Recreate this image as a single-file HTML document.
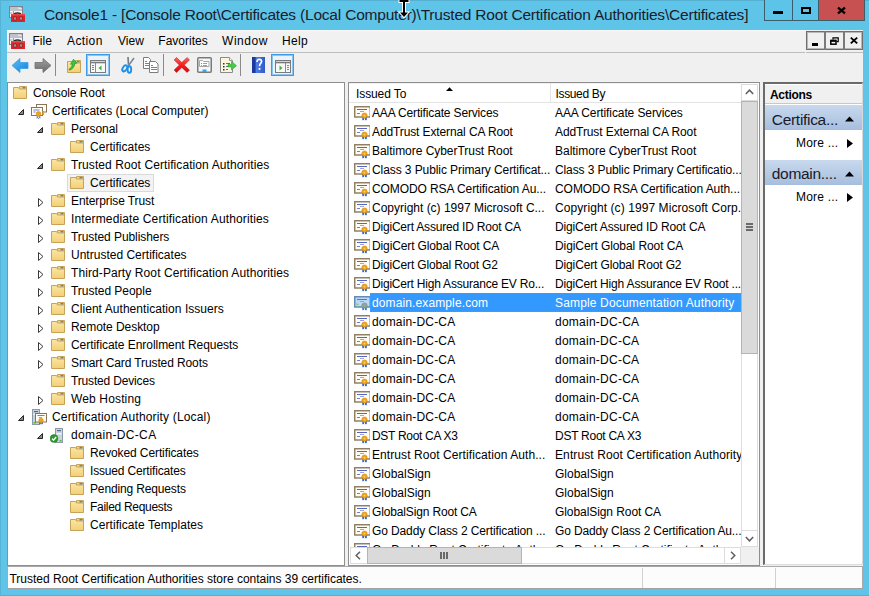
<!DOCTYPE html><html><head><meta charset="utf-8"><title>Console1</title><style>
*{margin:0;padding:0;box-sizing:border-box}
html,body{width:869px;height:596px;overflow:hidden}
body{background:#5ec5e9;position:relative;font-family:"Liberation Sans",sans-serif;font-size:12px;color:#000}
.a{position:absolute}
.t{position:absolute;white-space:nowrap}
svg.a{overflow:visible}
</style></head><body>
<svg width="0" height="0" style="position:absolute"><defs>
<linearGradient id="fold" x1="0" y1="0" x2="0" y2="1"><stop offset="0" stop-color="#fbe6a6"/><stop offset="1" stop-color="#f2cf74"/></linearGradient>
<symbol id="folder" viewBox="0 0 16 16">
 <path d="M7.5 2.5h7v3h-7z" fill="#f3d690" stroke="#c9a45c"/>
 <rect x="10.5" y="3" width="3" height="1.6" fill="#3a8ee0"/>
 <path d="M1.5 3.5h5l1 1.5h7v9.5h-13z" fill="url(#fold)" stroke="#c7a35a"/>
</symbol>
<symbol id="cert" viewBox="0 0 16 16">
 <rect x="0.75" y="0.75" width="15.5" height="10.25" fill="#fffdf6" stroke="#8b7a5c" stroke-width="1.4"/>
 <path d="M3 3.5h10" stroke="#5566c4" stroke-width="1"/><path d="M6 5.5h4" stroke="#9aa6dc"/><path d="M3 7.5h3" stroke="#7080cc"/>
 <path d="M8.3 11h1.8v3.5l-0.9-0.7l-0.9 0.7zM11 11h1.8v3.5l-0.9-0.7l-0.9 0.7z" fill="#1f63d8"/>
 <circle cx="10.5" cy="9.6" r="2.7" fill="#f0a21a" stroke="#cf860a" stroke-width="0.5"/>
 <circle cx="10.5" cy="9.6" r="0.9" fill="#ffd070"/>
</symbol>
<symbol id="certsel" viewBox="0 0 16 16">
 <rect x="0.75" y="0.75" width="15.5" height="10.25" fill="#b9d8f6" stroke="#5f86b0" stroke-width="1.4"/>
 <path d="M3 3.5h10" stroke="#4e77c4"/><path d="M6 5.5h4" stroke="#8aa6dc"/>
 <path d="M2.5 7l2.5 2h-2.5z" fill="#7ac943"/>
 <path d="M8.3 11h1.8v3.5l-0.9-0.7l-0.9 0.7zM11 11h1.8v3.5l-0.9-0.7l-0.9 0.7z" fill="#2d7be0"/>
 <circle cx="10.5" cy="9.6" r="2.7" fill="#8fa59a" stroke="#6f8a80" stroke-width="0.5"/>
</symbol>
<symbol id="store" viewBox="0 0 16 16">
 <rect x="5.5" y="1.5" width="10" height="7.5" fill="#fffdf6" stroke="#8a7456"/>
 <rect x="0.5" y="4.5" width="11" height="8" fill="#fffdf6" stroke="#8a7456"/>
 <path d="M2.5 7h6M2.5 9h2" stroke="#6f7fd0"/>
 <rect x="11.5" y="8" width="1.6" height="4" fill="#f0a21a"/>
 <path d="M6 12l-0.5 3.5l1.5-1l1 1.5l0.5-3zM9 12l0.5 3.5l-1.5-1l-1 1.5l-0.5-3z" fill="#1f63d8"/>
 <circle cx="7.5" cy="11" r="2.4" fill="#f0a21a" stroke="#d18a0c" stroke-width="0.6"/>
</symbol>
<symbol id="ca" viewBox="0 0 16 16">
 <rect x="1.5" y="0.5" width="7" height="15" fill="#c9d3de" stroke="#8c99a8"/>
 <rect x="3" y="2" width="4" height="1.2" fill="#5b6a7a"/>
 <rect x="2.5" y="4.5" width="5" height="1.5" fill="#eef3f8"/>
 <rect x="2.5" y="13" width="2.5" height="1.5" fill="#56c02b"/>
 <rect x="4.5" y="4.5" width="11" height="8.5" fill="#fffdf6" stroke="#8a7456"/>
 <path d="M6.5 6.5h7" stroke="#6f7fd0"/><path d="M8 8.5h3" stroke="#9aa6dc"/>
 <path d="M8.3 12.5h1.5v3l-0.75-0.6l-0.75 0.6zM10.3 12.5h1.5v3l-0.75-0.6l-0.75 0.6z" fill="#1f63d8"/>
 <circle cx="10" cy="11.5" r="2.3" fill="#f0a21a" stroke="#d18a0c" stroke-width="0.5"/>
</symbol>
<symbol id="casrv" viewBox="0 0 16 16">
 <rect x="5.5" y="1.5" width="7" height="14" fill="#c9d3de" stroke="#8c99a8"/>
 <rect x="7" y="3" width="4" height="1.2" fill="#5b6a7a"/>
 <rect x="6.5" y="6" width="5" height="1.5" fill="#eef3f8"/>
 <rect x="9.5" y="13" width="2" height="1.5" fill="#56c02b"/>
 <circle cx="4" cy="11.5" r="3.9" fill="#2f9a2f" stroke="#1c6e1c" stroke-width="0.5"/>
 <path d="M2 11.6l1.5 1.6l2.7-3.2" stroke="#fff" stroke-width="1.3" fill="none"/>
</symbol>
<symbol id="appicon" viewBox="0 0 17 17">
 <rect x="0.5" y="0.5" width="13" height="11" fill="#f6f6f8" stroke="#7f8290"/>
 <path d="M1 2h8.5M1 4h12" stroke="#8a8e9c" stroke-width="1"/>
 <rect x="10.5" y="1.2" width="1" height="1" fill="#8a8e9c"/><rect x="12" y="1.2" width="1" height="1" fill="#8a8e9c"/>
 <path d="M4.5 5v6.5M1 7h2.5" stroke="#9a9eaa"/>
 <path d="M5 8.5c0.5-2 6.5-2 7 0" stroke="#2a2a2a" stroke-width="1.4" fill="none"/>
 <rect x="2" y="8" width="14" height="8" fill="#d8262a"/>
 <rect x="2" y="8" width="14" height="1.5" fill="#ea4a4a"/>
 <rect x="5" y="11" width="2" height="3" fill="#b9c3c8" stroke="#6a2020" stroke-width="0.6"/>
 <rect x="11" y="11" width="2" height="3" fill="#b9c3c8" stroke="#6a2020" stroke-width="0.6"/>
</symbol>
<symbol id="expd" viewBox="0 0 8 8"><path d="M5.5 0.5v5h-5z" fill="#8a8a8a" stroke="#262626" stroke-linejoin="miter"/></symbol>
<symbol id="expc" viewBox="0 0 8 10"><path d="M0.5 0.5v8l4.5-4z" fill="#fff" stroke="#3a3a3a"/></symbol>
</defs></svg>
<div class="a" style="left:0;top:0;width:869px;height:1px;background:#55b0d2"></div>
<div class="a" style="left:0px;top:0px;width:1px;height:596px;background:#55b3d6"></div>
<div class="a" style="left:0px;top:595px;width:869px;height:1px;background:#55b0d2"></div>
<svg class="a" style="left:9px;top:6px" width="17" height="17"><use href="#appicon"/></svg>
<div class="t" style="left:44px;top:6.63px;font-size:15.5px;line-height:16px;color:#1b1b2b;letter-spacing:-0.2px">Console1 - [Console Root\Certificates (Local Computer)\Trusted Root Certification Authorities\Certificates]</div>
<div class="a" style="left:764px;top:0px;width:101px;height:21px;border:1px solid #3d5d6a;border-top:none;background:#5cc3e9"></div>
<div class="a" style="left:792px;top:0px;width:1px;height:21px;background:#3d5d6a"></div>
<div class="a" style="left:818px;top:0px;width:47px;height:21px;background:#c75050;border:1px solid #3d5d6a;border-top:none"></div>
<div class="a" style="left:773px;top:11px;width:10px;height:3px;background:#000"></div>
<div class="a" style="left:801px;top:7px;width:10px;height:7px;border:2px solid #000"></div>
<svg class="a" style="left:837px;top:7px" width="9" height="7"><path d="M1 0.6l7 5.8M8 0.6l-7 5.8" stroke="#000" stroke-width="2.3"/></svg>
<div class="a" style="left:7px;top:30px;width:856px;height:559px;background:#f0f0f0"></div>
<div class="a" style="left:7px;top:30px;width:798px;height:22px;background:#f1f1f1;border-top:1px solid #f8f8f8"></div>
<div class="a" style="left:7px;top:52px;width:798px;height:1px;background:#bdbdbd"></div>
<div class="a" style="left:806px;top:52px;width:57px;height:1px;background:#bdbdbd"></div>
<svg class="a" style="left:9px;top:33px" width="17" height="17"><use href="#appicon"/></svg>
<div class="t" style="left:32.5px;top:32.84px;font-size:12px;line-height:16px;color:#000;letter-spacing:0px">File</div>
<div class="t" style="left:67px;top:32.84px;font-size:12px;line-height:16px;color:#000;letter-spacing:0.4px">Action</div>
<div class="t" style="left:118px;top:32.84px;font-size:12px;line-height:16px;color:#000;letter-spacing:0px">View</div>
<div class="t" style="left:158.3px;top:32.84px;font-size:12px;line-height:16px;color:#000;letter-spacing:0px">Favorites</div>
<div class="t" style="left:222px;top:32.84px;font-size:12px;line-height:16px;color:#000;letter-spacing:0.55px">Window</div>
<div class="t" style="left:282px;top:32.84px;font-size:12px;line-height:16px;color:#000;letter-spacing:0.3px">Help</div>
<div class="a" style="left:806px;top:31px;width:57px;height:19px;border:1px solid #6e6e6e;background:#f0f0f0;box-shadow:inset 0 0 0 1px #b8b8b8"></div>
<div class="a" style="left:824px;top:31px;width:2px;height:19px;background:#7a7a7a"></div>
<div class="a" style="left:843px;top:31px;width:2px;height:19px;background:#7a7a7a"></div>
<div class="a" style="left:812px;top:43px;width:6px;height:2.5px;background:#000"></div>
<svg class="a" style="left:830px;top:37px" width="9" height="8"><path d="M3 2.5v-1.6h5.2v3.8h-1.6" fill="none" stroke="#000" stroke-width="1.2"/><rect x="0.8" y="3.5" width="5.2" height="3.7" fill="none" stroke="#000" stroke-width="1.5"/><path d="M0.8 3.8h5.2" stroke="#000" stroke-width="2"/></svg>
<svg class="a" style="left:850px;top:37px" width="8" height="7"><path d="M0.8 0.6l6.4 5.8M7.2 0.6l-6.4 5.8" stroke="#000" stroke-width="1.9"/></svg>
<svg class="a" style="left:11px;top:58px" width="18" height="15"><defs><linearGradient id="bk" x1="0" y1="0" x2="1" y2="1"><stop offset="0" stop-color="#5cc1f7"/><stop offset="1" stop-color="#0f7fe0"/></linearGradient></defs><path d="M1 7.5l8-7v4h8v6h-8v4z" fill="url(#bk)" stroke="#3a9ee8" stroke-width="0.8" stroke-linejoin="round"/></svg>
<svg class="a" style="left:34px;top:58px" width="18" height="15"><defs><linearGradient id="fw" x1="0" y1="0" x2="0" y2="1"><stop offset="0" stop-color="#a0a0a0"/><stop offset="1" stop-color="#6a6a6a"/></linearGradient></defs><path d="M17 7.5l-8-7v4h-8v6h8v4z" fill="url(#fw)" stroke="#707070" stroke-width="0.8" stroke-linejoin="round"/></svg>
<div class="a" style="left:55px;top:54px;width:1px;height:22px;background:#8a8a8a"></div>
<svg class="a" style="left:66px;top:58px" width="17" height="16"><path d="M9.5 2.5h5v3h-5z" fill="#f3d690" stroke="#c9a45c"/><rect x="11" y="3" width="2.5" height="1.5" fill="#3a8ee0"/><path d="M1.5 3.5h6l1 1.5h6v9.5h-13z" fill="url(#fold)" stroke="#c7a35a"/><path d="M3 11c1.5-0.5 3-2 3.5-5l-2 0.3l3-5l3.5 3.8l-2 0.3c-0.5 3.5-3 6-5.5 6.8z" fill="#3fc23f" stroke="#1f9a1f" stroke-width="0.7" stroke-linejoin="round"/></svg>
<div class="a" style="left:86px;top:54px;width:24px;height:22px;background:#e8f3fd;border:1px solid #3c9be8;box-shadow:inset 0 0 0 1px #8cc4f0"></div>
<svg class="a" style="left:90px;top:60px" width="16" height="13"><rect x="0.5" y="0.5" width="15" height="12" fill="#f8f8f8" stroke="#7a7a7a"/><path d="M0.5 2.5h15" stroke="#7a7a7a" stroke-width="1.6"/><path d="M5.5 3v9.5" stroke="#8a8a8a"/><path d="M2 5.5h2M2 7.5h2M2 9.5h2" stroke="#4a8fd8"/><path d="M11.5 5.5v5l-3-2.5z" fill="#3cb33c"/></svg>
<svg class="a" style="left:120px;top:55px" width="16" height="20"><path d="M8 2l0.5 8.5" stroke="#7a7a7a" stroke-width="1.6"/><path d="M14 3l-5.5 7.5" stroke="#6f8aa8" stroke-width="1.6"/><ellipse cx="4.8" cy="13.4" rx="2" ry="3.3" transform="rotate(35 4.8 13.4)" fill="none" stroke="#1d8fe6" stroke-width="1.9"/><ellipse cx="9.4" cy="14.5" rx="1.8" ry="3.3" fill="none" stroke="#1d8fe6" stroke-width="1.9"/></svg>
<svg class="a" style="left:142px;top:56px" width="18" height="18"><path d="M1.5 1.5h5l2 2v9h-7z" fill="#fff" stroke="#7c7c7c"/><path d="M3 5.5h2M3 7.5h4M3 9.5h4" stroke="#4f88d6"/><path d="M7.5 5.5h6l2.5 2.5v8.5h-8.5z" fill="#fff" stroke="#7c7c7c"/><path d="M9 9.5h2M9 11.5h6M9 13.5h6" stroke="#4f88d6"/></svg>
<div class="a" style="left:163px;top:54px;width:1px;height:22px;background:#8a8a8a"></div>
<svg class="a" style="left:173px;top:56px" width="18" height="18"><defs><linearGradient id="rx" x1="0" y1="0" x2="0" y2="1"><stop offset="0" stop-color="#f06a6a"/><stop offset="0.45" stop-color="#ff2020"/><stop offset="1" stop-color="#d00808"/></linearGradient></defs><path d="M3.5 1.5l5.3 5l5.3-5l2.4 2.4l-5.3 5.1l5.3 5.1l-2.4 2.4l-5.3-5.1l-5.3 5.1l-2.4-2.4l5.3-5.1l-5.3-5.1z" fill="url(#rx)" stroke="#b01010" stroke-width="0.5" stroke-linejoin="round"/></svg>
<svg class="a" style="left:197px;top:57px" width="16" height="16"><rect x="0.75" y="0.75" width="13.5" height="14.5" rx="1" fill="#f5f7fa" stroke="#7a7a7a" stroke-width="1.5"/><path d="M2.5 3.5h3l1 1h5.5v5h-9.5z" fill="#fff" stroke="#a8a8a8"/><path d="M6 6.5h4M6 8.5h4" stroke="#9a9ab8"/><rect x="4" y="6" width="1" height="1" fill="#27a0e8"/><rect x="4" y="8" width="1" height="1" fill="#b0a0a0"/><rect x="5.5" y="12.5" width="4" height="2.5" fill="#27aaf0"/></svg>
<svg class="a" style="left:220px;top:57px" width="18" height="16"><path d="M0.5 0.5h9l3 3v12h-12z" fill="#fcf6dc" stroke="#8a8a8a"/><path d="M9.5 0.5v3h3" fill="#fff" stroke="#9a9a9a"/><rect x="3" y="6" width="1.5" height="1.5" fill="#303030"/><rect x="3" y="9" width="1.5" height="1.5" fill="#303030"/><rect x="3" y="12" width="1.5" height="1.5" fill="#303030"/><path d="M6 6.5h4M6 9.5h2M6 12.5h2" stroke="#5a6aa0"/><path d="M8 7.5h3.5v-3l5 4.2l-5 4.2v-3h-3.5z" fill="#44cc44" stroke="#2aa02a" stroke-width="0.6"/></svg>
<div class="a" style="left:240px;top:54px;width:1px;height:22px;background:#8a8a8a"></div>
<svg class="a" style="left:252px;top:57px" width="14" height="16"><defs><linearGradient id="hp" x1="0" y1="0" x2="1" y2="0"><stop offset="0" stop-color="#1a3aa0"/><stop offset="0.25" stop-color="#1a3aa0"/><stop offset="0.3" stop-color="#4f7ee6"/><stop offset="1" stop-color="#2e58c8"/></linearGradient></defs><rect x="0" y="0" width="13" height="16" fill="url(#hp)"/><path d="M5 5c0-1.8 1-2.6 2.3-2.6c1.4 0 2.3 0.9 2.3 2.2c0 1.6-2 2-2 3.8v0.8" fill="none" stroke="#fff" stroke-width="1.6"/><rect x="6.6" y="11" width="1.8" height="1.8" fill="#fff"/></svg>
<div class="a" style="left:271px;top:54px;width:23px;height:22px;background:#e8f3fd;border:1px solid #3c9be8;box-shadow:inset 0 0 0 1px #8cc4f0"></div>
<svg class="a" style="left:275px;top:60px" width="16" height="13"><rect x="0.5" y="0.5" width="15" height="12" fill="#f8f8f8" stroke="#7a7a7a"/><path d="M0.5 2.5h15" stroke="#7a7a7a" stroke-width="1.6"/><path d="M10.5 3v9.5" stroke="#8a8a8a"/><path d="M12 5.5h2M12 7.5h2M12 9.5h2" stroke="#4a8fd8"/><path d="M4.5 5.5v5l3-2.5z" fill="#3cb33c"/></svg>
<div class="a" style="left:7px;top:82px;width:338px;height:484px;background:#fff;border:1px solid #8e8e8e"></div>
<div class="a" style="left:348px;top:82px;width:412px;height:484px;background:#fff;border:1px solid #8e8e8e"></div>
<div class="a" style="left:763px;top:82px;width:100px;height:483px;background:#fff;border-left:2px solid #6a6a6a;border-top:2px solid #6a6a6a;border-right:1px solid #d8d8d8;border-bottom:1px solid #dcdcdc"></div>
<svg class="a" style="left:12px;top:84px" width="16" height="16"><use href="#folder"/></svg>
<div class="t" style="left:33px;top:84.84px;font-size:12px;line-height:16px;color:#000;letter-spacing:-0.082px">Console Root</div>
<svg class="a" style="left:18px;top:109px" width="8" height="8"><use href="#expd"/></svg>
<svg class="a" style="left:31px;top:103px" width="16" height="16"><use href="#store"/></svg>
<div class="t" style="left:52px;top:102.84px;font-size:12px;line-height:16px;color:#000;letter-spacing:0.012px">Certificates (Local Computer)</div>
<svg class="a" style="left:37px;top:127px" width="8" height="8"><use href="#expd"/></svg>
<svg class="a" style="left:50px;top:120px" width="16" height="16"><use href="#folder"/></svg>
<div class="t" style="left:71px;top:120.84px;font-size:12px;line-height:16px;color:#000;letter-spacing:-0.051px">Personal</div>
<svg class="a" style="left:69px;top:138px" width="16" height="16"><use href="#folder"/></svg>
<div class="t" style="left:90px;top:138.84px;font-size:12px;line-height:16px;color:#000;letter-spacing:0.032px">Certificates</div>
<svg class="a" style="left:37px;top:163px" width="8" height="8"><use href="#expd"/></svg>
<svg class="a" style="left:50px;top:156px" width="16" height="16"><use href="#folder"/></svg>
<div class="t" style="left:71px;top:156.84px;font-size:12px;line-height:16px;color:#000;letter-spacing:0.087px">Trusted Root Certification Authorities</div>
<div class="a" style="left:67px;top:174px;width:87px;height:18px;background:#f3f3f3;border:1px solid #dadada"></div>
<svg class="a" style="left:69px;top:174px" width="16" height="16"><use href="#folder"/></svg>
<div class="t" style="left:90px;top:174.84px;font-size:12px;line-height:16px;color:#000;letter-spacing:0.032px">Certificates</div>
<svg class="a" style="left:38px;top:198px" width="8" height="10"><use href="#expc"/></svg>
<svg class="a" style="left:50px;top:192px" width="16" height="16"><use href="#folder"/></svg>
<div class="t" style="left:71px;top:192.84px;font-size:12px;line-height:16px;color:#000;letter-spacing:-0.096px">Enterprise Trust</div>
<svg class="a" style="left:38px;top:216px" width="8" height="10"><use href="#expc"/></svg>
<svg class="a" style="left:50px;top:210px" width="16" height="16"><use href="#folder"/></svg>
<div class="t" style="left:71px;top:210.84px;font-size:12px;line-height:16px;color:#000;letter-spacing:0.136px">Intermediate Certification Authorities</div>
<svg class="a" style="left:38px;top:234px" width="8" height="10"><use href="#expc"/></svg>
<svg class="a" style="left:50px;top:228px" width="16" height="16"><use href="#folder"/></svg>
<div class="t" style="left:71px;top:228.84px;font-size:12px;line-height:16px;color:#000;letter-spacing:-0.075px">Trusted Publishers</div>
<svg class="a" style="left:38px;top:252px" width="8" height="10"><use href="#expc"/></svg>
<svg class="a" style="left:50px;top:246px" width="16" height="16"><use href="#folder"/></svg>
<div class="t" style="left:71px;top:246.84px;font-size:12px;line-height:16px;color:#000;letter-spacing:0.009px">Untrusted Certificates</div>
<svg class="a" style="left:38px;top:270px" width="8" height="10"><use href="#expc"/></svg>
<svg class="a" style="left:50px;top:264px" width="16" height="16"><use href="#folder"/></svg>
<div class="t" style="left:71px;top:264.84px;font-size:12px;line-height:16px;color:#000;letter-spacing:0.096px">Third-Party Root Certification Authorities</div>
<svg class="a" style="left:38px;top:288px" width="8" height="10"><use href="#expc"/></svg>
<svg class="a" style="left:50px;top:282px" width="16" height="16"><use href="#folder"/></svg>
<div class="t" style="left:71px;top:282.84px;font-size:12px;line-height:16px;color:#000;letter-spacing:-0.027px">Trusted People</div>
<svg class="a" style="left:38px;top:306px" width="8" height="10"><use href="#expc"/></svg>
<svg class="a" style="left:50px;top:300px" width="16" height="16"><use href="#folder"/></svg>
<div class="t" style="left:71px;top:300.84px;font-size:12px;line-height:16px;color:#000;letter-spacing:0.052px">Client Authentication Issuers</div>
<svg class="a" style="left:38px;top:324px" width="8" height="10"><use href="#expc"/></svg>
<svg class="a" style="left:50px;top:318px" width="16" height="16"><use href="#folder"/></svg>
<div class="t" style="left:71px;top:318.84px;font-size:12px;line-height:16px;color:#000;letter-spacing:-0.055px">Remote Desktop</div>
<svg class="a" style="left:38px;top:342px" width="8" height="10"><use href="#expc"/></svg>
<svg class="a" style="left:50px;top:336px" width="16" height="16"><use href="#folder"/></svg>
<div class="t" style="left:71px;top:336.84px;font-size:12px;line-height:16px;color:#000;letter-spacing:-0.048px">Certificate Enrollment Requests</div>
<svg class="a" style="left:38px;top:360px" width="8" height="10"><use href="#expc"/></svg>
<svg class="a" style="left:50px;top:354px" width="16" height="16"><use href="#folder"/></svg>
<div class="t" style="left:71px;top:354.84px;font-size:12px;line-height:16px;color:#000;letter-spacing:-0.109px">Smart Card Trusted Roots</div>
<svg class="a" style="left:50px;top:372px" width="16" height="16"><use href="#folder"/></svg>
<div class="t" style="left:71px;top:372.84px;font-size:12px;line-height:16px;color:#000;letter-spacing:-0.167px">Trusted Devices</div>
<svg class="a" style="left:38px;top:396px" width="8" height="10"><use href="#expc"/></svg>
<svg class="a" style="left:50px;top:390px" width="16" height="16"><use href="#folder"/></svg>
<div class="t" style="left:71px;top:390.84px;font-size:12px;line-height:16px;color:#000;letter-spacing:0.144px">Web Hosting</div>
<svg class="a" style="left:18px;top:415px" width="8" height="8"><use href="#expd"/></svg>
<svg class="a" style="left:31px;top:409px" width="16" height="16"><use href="#ca"/></svg>
<div class="t" style="left:52px;top:408.84px;font-size:12px;line-height:16px;color:#000;letter-spacing:0.168px">Certification Authority (Local)</div>
<svg class="a" style="left:37px;top:433px" width="8" height="8"><use href="#expd"/></svg>
<svg class="a" style="left:50px;top:427px" width="16" height="16"><use href="#casrv"/></svg>
<div class="t" style="left:71px;top:426.84px;font-size:12px;line-height:16px;color:#000;letter-spacing:0.344px">domain-DC-CA</div>
<svg class="a" style="left:69px;top:444px" width="16" height="16"><use href="#folder"/></svg>
<div class="t" style="left:90px;top:444.84px;font-size:12px;line-height:16px;color:#000;letter-spacing:-0.104px">Revoked Certificates</div>
<svg class="a" style="left:69px;top:462px" width="16" height="16"><use href="#folder"/></svg>
<div class="t" style="left:90px;top:462.84px;font-size:12px;line-height:16px;color:#000;letter-spacing:-0.170px">Issued Certificates</div>
<svg class="a" style="left:69px;top:480px" width="16" height="16"><use href="#folder"/></svg>
<div class="t" style="left:90px;top:480.84px;font-size:12px;line-height:16px;color:#000;letter-spacing:-0.144px">Pending Requests</div>
<svg class="a" style="left:69px;top:498px" width="16" height="16"><use href="#folder"/></svg>
<div class="t" style="left:90px;top:498.84px;font-size:12px;line-height:16px;color:#000;letter-spacing:-0.295px">Failed Requests</div>
<svg class="a" style="left:69px;top:516px" width="16" height="16"><use href="#folder"/></svg>
<div class="t" style="left:90px;top:516.84px;font-size:12px;line-height:16px;color:#000;letter-spacing:0.062px">Certificate Templates</div>
<div class="a" style="left:349px;top:83px;width:392px;height:20px;background:#fff;border-bottom:1px solid #e3e3e3;border-top:1px solid #f0f0f0"></div>
<div class="a" style="left:550px;top:83px;width:1px;height:19px;background:#e5e5e5"></div>
<div class="t" style="left:356px;top:86.24px;font-size:12px;line-height:16px;color:#000;letter-spacing:-0.1px">Issued To</div>
<div class="t" style="left:555.5px;top:86.24px;font-size:12px;line-height:16px;color:#000;letter-spacing:-0.35px">Issued By</div>
<svg class="a" style="left:446px;top:87px" width="8" height="5"><path d="M0 4l3.5-3.8l3.5 3.8z" fill="#000"/></svg>
<div class="a" style="left:349px;top:103px;width:392px;height:444px;overflow:hidden">
<svg class="a" style="left:5px;top:3px" width="16" height="16"><use href="#cert"/></svg>
<div class="t" style="left:23px;top:2.44px;font-size:12px;line-height:16px;color:#000;letter-spacing:-0.156px">AAA Certificate Services</div>
<div class="t" style="left:206px;top:2.44px;font-size:12px;line-height:16px;color:#000;letter-spacing:-0.101px">AAA Certificate Services</div>
<svg class="a" style="left:5px;top:22px" width="16" height="16"><use href="#cert"/></svg>
<div class="t" style="left:23px;top:21.44px;font-size:12px;line-height:16px;color:#000;letter-spacing:-0.113px">AddTrust External CA Root</div>
<div class="t" style="left:206px;top:21.44px;font-size:12px;line-height:16px;color:#000;letter-spacing:-0.090px">AddTrust External CA Root</div>
<svg class="a" style="left:5px;top:41px" width="16" height="16"><use href="#cert"/></svg>
<div class="t" style="left:23px;top:40.44px;font-size:12px;line-height:16px;color:#000;letter-spacing:-0.038px">Baltimore CyberTrust Root</div>
<div class="t" style="left:206px;top:40.44px;font-size:12px;line-height:16px;color:#000;letter-spacing:-0.015px">Baltimore CyberTrust Root</div>
<svg class="a" style="left:5px;top:60px" width="16" height="16"><use href="#cert"/></svg>
<div class="t" style="left:23px;top:59.44px;font-size:12px;line-height:16px;color:#000;letter-spacing:-0.087px">Class 3 Public Primary Certificat...</div>
<div class="t" style="left:206px;top:59.44px;font-size:12px;line-height:16px;color:#000;letter-spacing:-0.106px">Class 3 Public Primary Certificatio...</div>
<svg class="a" style="left:5px;top:79px" width="16" height="16"><use href="#cert"/></svg>
<div class="t" style="left:23px;top:78.44px;font-size:12px;line-height:16px;color:#000;letter-spacing:-0.093px">COMODO RSA Certification Au...</div>
<div class="t" style="left:206px;top:78.44px;font-size:12px;line-height:16px;color:#000;letter-spacing:-0.056px">COMODO RSA Certification Auth...</div>
<svg class="a" style="left:5px;top:98px" width="16" height="16"><use href="#cert"/></svg>
<div class="t" style="left:23px;top:97.44px;font-size:12px;line-height:16px;color:#000;letter-spacing:-0.006px">Copyright (c) 1997 Microsoft C...</div>
<div class="t" style="left:206px;top:97.44px;font-size:12px;line-height:16px;color:#000;letter-spacing:0.082px">Copyright (c) 1997 Microsoft Corp.</div>
<svg class="a" style="left:5px;top:117px" width="16" height="16"><use href="#cert"/></svg>
<div class="t" style="left:23px;top:116.44px;font-size:12px;line-height:16px;color:#000;letter-spacing:-0.194px">DigiCert Assured ID Root CA</div>
<div class="t" style="left:206px;top:116.44px;font-size:12px;line-height:16px;color:#000;letter-spacing:-0.138px">DigiCert Assured ID Root CA</div>
<svg class="a" style="left:5px;top:136px" width="16" height="16"><use href="#cert"/></svg>
<div class="t" style="left:23px;top:135.44px;font-size:12px;line-height:16px;color:#000;letter-spacing:-0.123px">DigiCert Global Root CA</div>
<div class="t" style="left:206px;top:135.44px;font-size:12px;line-height:16px;color:#000;letter-spacing:-0.082px">DigiCert Global Root CA</div>
<svg class="a" style="left:5px;top:155px" width="16" height="16"><use href="#cert"/></svg>
<div class="t" style="left:23px;top:154.44px;font-size:12px;line-height:16px;color:#000;letter-spacing:-0.155px">DigiCert Global Root G2</div>
<div class="t" style="left:206px;top:154.44px;font-size:12px;line-height:16px;color:#000;letter-spacing:-0.131px">DigiCert Global Root G2</div>
<svg class="a" style="left:5px;top:174px" width="16" height="16"><use href="#cert"/></svg>
<div class="t" style="left:23px;top:173.44px;font-size:12px;line-height:16px;color:#000;letter-spacing:-0.209px">DigiCert High Assurance EV Ro...</div>
<div class="t" style="left:206px;top:173.44px;font-size:12px;line-height:16px;color:#000;letter-spacing:-0.173px">DigiCert High Assurance EV Root ...</div>
<div class="a" style="left:21px;top:190px;width:371px;height:19px;background:#3399ff;outline:1px dotted #c08040;outline-offset:-1px"></div>
<svg class="a" style="left:5px;top:193px" width="16" height="16"><use href="#certsel"/></svg>
<div class="t" style="left:23px;top:192.44px;font-size:12px;line-height:16px;color:#fff;letter-spacing:0.117px">domain.example.com</div>
<div class="t" style="left:206px;top:192.44px;font-size:12px;line-height:16px;color:#fff;letter-spacing:0.156px">Sample Documentation Authority</div>
<svg class="a" style="left:5px;top:212px" width="16" height="16"><use href="#cert"/></svg>
<div class="t" style="left:23px;top:211.44px;font-size:12px;line-height:16px;color:#000;letter-spacing:0.164px">domain-DC-CA</div>
<div class="t" style="left:206px;top:211.44px;font-size:12px;line-height:16px;color:#000;letter-spacing:0.245px">domain-DC-CA</div>
<svg class="a" style="left:5px;top:231px" width="16" height="16"><use href="#cert"/></svg>
<div class="t" style="left:23px;top:230.44px;font-size:12px;line-height:16px;color:#000;letter-spacing:0.164px">domain-DC-CA</div>
<div class="t" style="left:206px;top:230.44px;font-size:12px;line-height:16px;color:#000;letter-spacing:0.245px">domain-DC-CA</div>
<svg class="a" style="left:5px;top:250px" width="16" height="16"><use href="#cert"/></svg>
<div class="t" style="left:23px;top:249.44px;font-size:12px;line-height:16px;color:#000;letter-spacing:0.164px">domain-DC-CA</div>
<div class="t" style="left:206px;top:249.44px;font-size:12px;line-height:16px;color:#000;letter-spacing:0.245px">domain-DC-CA</div>
<svg class="a" style="left:5px;top:269px" width="16" height="16"><use href="#cert"/></svg>
<div class="t" style="left:23px;top:268.44px;font-size:12px;line-height:16px;color:#000;letter-spacing:0.164px">domain-DC-CA</div>
<div class="t" style="left:206px;top:268.44px;font-size:12px;line-height:16px;color:#000;letter-spacing:0.245px">domain-DC-CA</div>
<svg class="a" style="left:5px;top:288px" width="16" height="16"><use href="#cert"/></svg>
<div class="t" style="left:23px;top:287.44px;font-size:12px;line-height:16px;color:#000;letter-spacing:0.164px">domain-DC-CA</div>
<div class="t" style="left:206px;top:287.44px;font-size:12px;line-height:16px;color:#000;letter-spacing:0.245px">domain-DC-CA</div>
<svg class="a" style="left:5px;top:307px" width="16" height="16"><use href="#cert"/></svg>
<div class="t" style="left:23px;top:306.44px;font-size:12px;line-height:16px;color:#000;letter-spacing:0.164px">domain-DC-CA</div>
<div class="t" style="left:206px;top:306.44px;font-size:12px;line-height:16px;color:#000;letter-spacing:0.245px">domain-DC-CA</div>
<svg class="a" style="left:5px;top:326px" width="16" height="16"><use href="#cert"/></svg>
<div class="t" style="left:23px;top:325.44px;font-size:12px;line-height:16px;color:#000;letter-spacing:-0.305px">DST Root CA X3</div>
<div class="t" style="left:206px;top:325.44px;font-size:12px;line-height:16px;color:#000;letter-spacing:-0.263px">DST Root CA X3</div>
<svg class="a" style="left:5px;top:345px" width="16" height="16"><use href="#cert"/></svg>
<div class="t" style="left:23px;top:344.44px;font-size:12px;line-height:16px;color:#000;letter-spacing:0.077px">Entrust Root Certification Auth...</div>
<div class="t" style="left:206px;top:344.44px;font-size:12px;line-height:16px;color:#000;letter-spacing:0.111px">Entrust Root Certification Authority</div>
<svg class="a" style="left:5px;top:364px" width="16" height="16"><use href="#cert"/></svg>
<div class="t" style="left:23px;top:363.44px;font-size:12px;line-height:16px;color:#000;">GlobalSign</div>
<div class="t" style="left:206px;top:363.44px;font-size:12px;line-height:16px;color:#000;">GlobalSign</div>
<svg class="a" style="left:5px;top:383px" width="16" height="16"><use href="#cert"/></svg>
<div class="t" style="left:23px;top:382.44px;font-size:12px;line-height:16px;color:#000;">GlobalSign</div>
<div class="t" style="left:206px;top:382.44px;font-size:12px;line-height:16px;color:#000;">GlobalSign</div>
<svg class="a" style="left:5px;top:402px" width="16" height="16"><use href="#cert"/></svg>
<div class="t" style="left:23px;top:401.44px;font-size:12px;line-height:16px;color:#000;letter-spacing:-0.148px">GlobalSign Root CA</div>
<div class="t" style="left:206px;top:401.44px;font-size:12px;line-height:16px;color:#000;letter-spacing:-0.075px">GlobalSign Root CA</div>
<svg class="a" style="left:5px;top:421px" width="16" height="16"><use href="#cert"/></svg>
<div class="t" style="left:23px;top:420.44px;font-size:12px;line-height:16px;color:#000;letter-spacing:-0.115px">Go Daddy Class 2 Certification ...</div>
<div class="t" style="left:206px;top:420.44px;font-size:12px;line-height:16px;color:#000;letter-spacing:-0.138px">Go Daddy Class 2 Certification Au...</div>
<svg class="a" style="left:5px;top:440px" width="16" height="16"><use href="#cert"/></svg>
<div class="t" style="left:23px;top:439.44px;font-size:12px;line-height:16px;color:#000;">Go Daddy Root Certificate Auth...</div>
<div class="t" style="left:206px;top:439.44px;font-size:12px;line-height:16px;color:#000;">Go Daddy Root Certificate Auth...</div>
</div>
<div class="a" style="left:741px;top:84px;width:17px;height:463px;background:#fff;border-left:1px solid #dedede;border-right:1px solid #dedede"></div>
<div class="a" style="left:741px;top:84px;width:17px;height:17px;background:#fff;border:1px solid #dcdcdc"></div>
<svg class="a" style="left:745px;top:89px" width="9" height="6"><path d="M0.8 5l3.7-3.8l3.7 3.8" fill="none" stroke="#606060" stroke-width="1.5"/></svg>
<div class="a" style="left:741px;top:101px;width:17px;height:253px;background:#dadada;border:1px solid #b4b4b4"></div>
<div class="a" style="left:746px;top:223px;width:7px;height:2px;background:#6a6a6a"></div>
<div class="a" style="left:746px;top:226px;width:7px;height:2px;background:#6a6a6a"></div>
<div class="a" style="left:746px;top:229px;width:7px;height:2px;background:#6a6a6a"></div>
<div class="a" style="left:741px;top:530px;width:17px;height:17px;background:#fff;border:1px solid #dcdcdc"></div>
<svg class="a" style="left:745px;top:536px" width="9" height="6"><path d="M0.8 1l3.7 3.8l3.7-3.8" fill="none" stroke="#606060" stroke-width="1.5"/></svg>
<div class="a" style="left:350px;top:547px;width:391px;height:17px;background:#fff;border-top:1px solid #dedede;border-bottom:1px solid #dedede"></div>
<div class="a" style="left:350px;top:547px;width:18px;height:17px;background:#fff;border:1px solid #dcdcdc"></div>
<svg class="a" style="left:355px;top:551px" width="6" height="9"><path d="M5 0.8l-3.8 3.7l3.8 3.7" fill="none" stroke="#606060" stroke-width="1.5"/></svg>
<div class="a" style="left:367px;top:547px;width:155px;height:17px;background:#dadada;border:1px solid #b4b4b4"></div>
<div class="a" style="left:440px;top:552px;width:2px;height:7px;background:#6a6a6a"></div>
<div class="a" style="left:443px;top:552px;width:2px;height:7px;background:#6a6a6a"></div>
<div class="a" style="left:446px;top:552px;width:2px;height:7px;background:#6a6a6a"></div>
<div class="a" style="left:724px;top:547px;width:17px;height:17px;background:#fff;border:1px solid #dcdcdc"></div>
<svg class="a" style="left:730px;top:551px" width="6" height="9"><path d="M1 0.8l3.8 3.7l-3.8 3.7" fill="none" stroke="#606060" stroke-width="1.5"/></svg>
<div class="a" style="left:741px;top:547px;width:18px;height:18px;background:#f0f0f0"></div>
<div class="a" style="left:765px;top:85px;width:97px;height:19px;background:#f0f0f0;border-bottom:1px solid #c8c8c8"></div>
<div class="t" style="left:770px;top:86.64px;font-size:12px;line-height:16px;color:#000;font-weight:bold;letter-spacing:-0.3px">Actions</div>
<div class="a" style="left:765px;top:105px;width:97px;height:25px;background:linear-gradient(#c8d9ee,#a6bedd)"></div>
<div class="t" style="left:771.8px;top:111.63px;font-size:15.5px;line-height:16px;color:#1a1a2a;letter-spacing:-0.3px">Certifica...</div>
<svg class="a" style="left:845px;top:116px" width="10" height="6"><path d="M0 5.5l4.5-5l4.5 5z" fill="#000"/></svg>
<div class="t" style="left:796px;top:134.84px;font-size:12px;line-height:16px;color:#000;letter-spacing:0.2px">More ...</div>
<svg class="a" style="left:847px;top:139px" width="6" height="9"><path d="M0 0l6 4.5l-6 4.5z" fill="#000"/></svg>
<div class="a" style="left:765px;top:160px;width:97px;height:25px;background:linear-gradient(#c8d9ee,#a6bedd)"></div>
<div class="t" style="left:771.8px;top:165.63px;font-size:15.5px;line-height:16px;color:#1a1a2a;letter-spacing:-0.3px">domain....</div>
<svg class="a" style="left:845px;top:171px" width="10" height="6"><path d="M0 5.5l4.5-5l4.5 5z" fill="#000"/></svg>
<div class="t" style="left:796px;top:188.84px;font-size:12px;line-height:16px;color:#000;letter-spacing:0.2px">More ...</div>
<svg class="a" style="left:847px;top:193px" width="6" height="9"><path d="M0 0l6 4.5l-6 4.5z" fill="#000"/></svg>
<div class="a" style="left:7px;top:566px;width:856px;height:23px;background:#fcfcfc;border-left:1px solid #a8a8a8;border-right:1px solid #a8a8a8;border-bottom:1px solid #a0a0a0;border-top:1px solid #a8a8a8"></div>
<div class="t" style="left:9.5px;top:571.24px;font-size:12px;line-height:16px;color:#000;letter-spacing:-0.02px">Trusted Root Certification Authorities store contains 39 certificates.</div>
<div class="a" style="left:642px;top:568px;width:1px;height:20px;background:#d0d0d0"></div>
<div class="a" style="left:775px;top:568px;width:1px;height:20px;background:#d0d0d0"></div>
<svg class="a" style="left:390px;top:0px" width="30" height="22"><path d="M14 -6L18.5 -1.5V2H15V12.5H18L14 17L10 12.5H13V2H9.5V-1.5Z" fill="#000" stroke="#fff" stroke-width="2" paint-order="stroke"/></svg>
</body></html>
